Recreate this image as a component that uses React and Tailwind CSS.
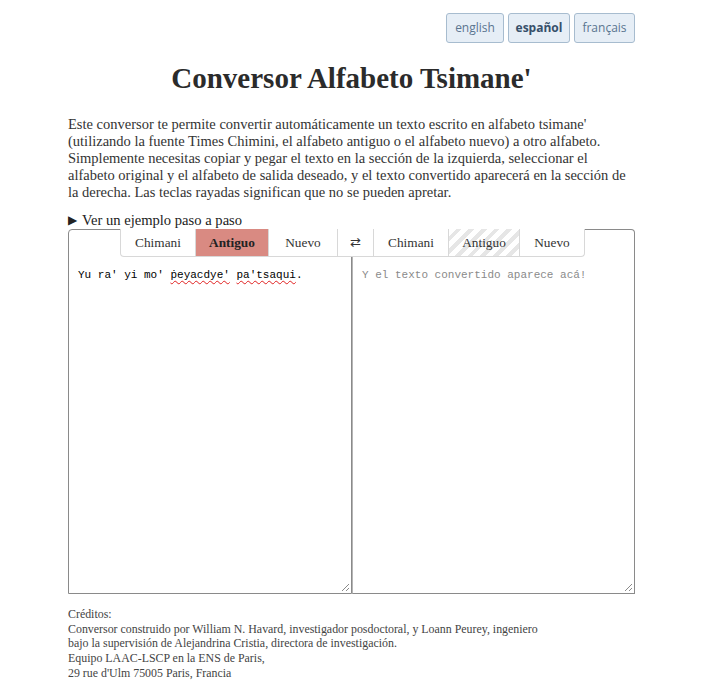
import React from "react";

const serif = { fontFamily: '"Liberation Serif", "Times New Roman", serif' };

function Handle() {
  return (
    <svg className="absolute right-[1px] bottom-[1px]" width="9" height="9" viewBox="0 0 9 9">
      <line x1="1" y1="8" x2="8" y2="1" stroke="#8a8a8a" strokeWidth="1" />
      <line x1="5" y1="8" x2="8" y2="5" stroke="#8a8a8a" strokeWidth="1" />
    </svg>
  );
}

export default function App() {
  const tabs = [
    { t: "Chimani", w: "w-[75px]" },
    { t: "Antiguo", w: "w-[73px]", active: true },
    { t: "Nuevo", w: "w-[69px]" },
    { t: "⇄", w: "w-[36px]" },
    { t: "Chimani", w: "w-[75px]" },
    { t: "Antiguo", w: "w-[71px]", striped: true },
    { t: "Nuevo", w: "w-[64px]" },
  ];
  return (
    <div className="w-[701px] min-h-[686px] bg-white text-[#333]" style={serif}>
      <div className="w-[567px] ml-[68px] pt-[13px]">
        <div className="flex justify-end gap-[4px]" style={{ fontFamily: '"Open Sans", "Noto Sans", sans-serif' }}>
          {[
            ["english", "w-[58px]", false],
            ["español", "w-[62px]", true],
            ["français", "w-[61px]", false],
          ].map(([l, w, b]) => (
            <div
              key={l}
              className={`${w} h-[30px] flex items-center justify-center rounded-[3px] border border-[#a7bccf] bg-[#e6eef6] text-[12px] ${b ? "font-bold text-[#36506a]" : "text-[#5a7590]"}`}
            >
              {l}
            </div>
          ))}
        </div>
        <h1 className="text-center font-bold text-[29px] leading-none mt-[21px] text-[#2b2b2b]">Conversor Alfabeto Tsimane'</h1>
        <p className="mt-[23px] text-[14.5px] leading-[17px] text-[#333]">
          Este conversor te permite convertir automáticamente un texto escrito en alfabeto tsimane' (utilizando la fuente Times Chimini, el alfabeto antiguo o el alfabeto nuevo) a otro alfabeto. Simplemente necesitas copiar y pegar el texto en la sección de la izquierda, seleccionar el alfabeto original y el alfabeto de salida deseado, y el texto convertido aparecerá en la sección de la derecha. Las teclas rayadas significan que no se pueden apretar.
        </p>
        <div className="mt-[11px] flex items-center text-[14.6px] leading-[17px] text-[#222]">
          <span className="text-[12px] mr-[5px]">▶</span>
          <span>Ver un ejemplo paso a paso</span>
        </div>
        <div className="relative flex h-[365px]">
          <div className="relative w-[284px] h-full border border-[#8a8a8a] rounded-tl-[4px] pt-[37px] px-[9px] text-[11px] text-black" style={{ fontFamily: '"Liberation Mono", monospace' }}>
            Yu ra' yi mo'{" "}
            <span className="underline decoration-wavy decoration-[#e02020] decoration-1 underline-offset-2">ṗeyacdye'</span>{" "}
            <span className="underline decoration-wavy decoration-[#e02020] decoration-1 underline-offset-2">pa'tsaqui</span>.
            <Handle />
          </div>
          <div className="relative w-[283px] h-full border border-[#8a8a8a] border-l-[#b5b5b5] rounded-tr-[4px] pt-[37px] px-[9px] text-[11px] text-[#8a8a8a]" style={{ fontFamily: '"Liberation Mono", monospace' }}>
            Y el texto convertido aparece acá!
            <Handle />
          </div>
          <div className="absolute left-[52px] top-0 flex h-[28px] bg-white border border-t-0 border-[#d8d8d8] rounded-b-[4px] overflow-hidden text-[13.3px] text-[#333]">
            {tabs.map((tb, i) => (
              <div
                key={i}
                className={`${tb.w} h-full flex items-center justify-center ${i < tabs.length - 1 ? "border-r border-[#d8d8d8]" : ""} ${tb.active ? "bg-[#d98a82] font-bold text-[#222]" : ""} ${tb.striped ? "bg-[repeating-linear-gradient(135deg,#ffffff_0px,#ffffff_5px,#e6e6e6_5px,#e6e6e6_9px)]" : ""}`}
              >
                {tb.t}
              </div>
            ))}
          </div>
        </div>
        <div className="mt-[13px] text-[11.9px] leading-[14.7px] text-[#444]">
          <div>Créditos:</div>
          <div>Conversor construido por William N. Havard, investigador posdoctoral, y Loann Peurey, ingeniero</div>
          <div>bajo la supervisión de Alejandrina Cristia, directora de investigación.</div>
          <div>Equipo LAAC-LSCP en la ENS de Paris,</div>
          <div>29 rue d'Ulm 75005 Paris, Francia</div>
        </div>
      </div>
    </div>
  );
}
